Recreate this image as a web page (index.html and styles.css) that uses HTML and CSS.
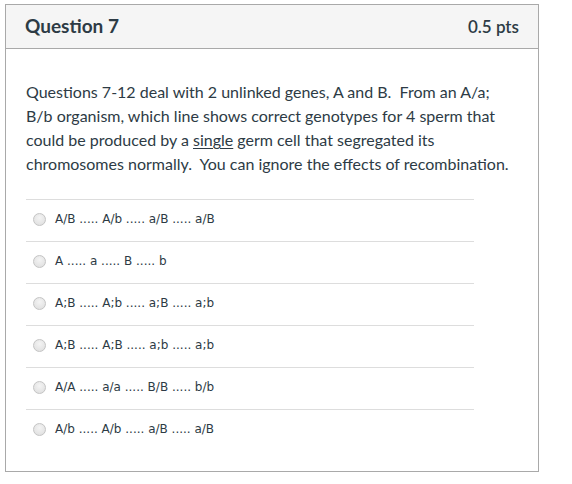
FILE: index.html
```html
<!DOCTYPE html>
<html>
<head>
<meta charset="utf-8">
<link rel="stylesheet" href="styles.css">
</head>
<body>
<div class="card">
  <div class="card-header">
    <div class="q-title">Question 7</div>
    <div class="q-pts">0.5 pts</div>
  </div>
  <div class="card-body">
    <p class="q-text">Questions 7-12 deal with 2 unlinked genes, A and B.&nbsp; From an A/a; B/b organism, which line shows correct genotypes for 4 sperm that could be produced by a <u>single</u> germ cell that segregated its chromosomes normally.&nbsp; You can ignore the effects of recombination.</p>
    <div class="answers">
      <label class="answer"><span class="radio"></span><span class="a-text">A/B ..... A/b ..... a/B ..... a/B</span></label>
      <label class="answer"><span class="radio"></span><span class="a-text">A ..... a ..... B ..... b</span></label>
      <label class="answer"><span class="radio"></span><span class="a-text">A;B ..... A;b ..... a;B ..... a;b</span></label>
      <label class="answer"><span class="radio"></span><span class="a-text">A;B ..... A;B ..... a;b ..... a;b</span></label>
      <label class="answer"><span class="radio"></span><span class="a-text">A/A ..... a/a ..... B/B ..... b/b</span></label>
      <label class="answer"><span class="radio"></span><span class="a-text">A/b ..... A/b ..... a/B ..... a/B</span></label>
    </div>
  </div>
</div>
</body>
</html>
```

FILE: styles.css
```css
html, body {
  margin: 0;
  padding: 0;
  background: #ffffff;
}
body {
  padding: 4px 0 0 5px;
  font-family: Lato, "Liberation Sans", sans-serif;
  color: #2d3b45;
}
.card {
  width: 532px;
  border: 1px solid #a9a9a9;
  background: #fff;
}
.card-header {
  display: flex;
  justify-content: space-between;
  align-items: center;
  height: 43px;
  padding: 0 19px 0 19px;
  background: #f5f5f5;
  border-bottom: 1px solid #a9a9a9;
}
.q-title {
  font-size: 19px;
  font-weight: 700;
  color: #2d3b45;
  margin-top: -2px;
}
.q-pts {
  font-size: 17px;
  font-weight: 600;
  color: #2d3b45;
}
.card-body {
  padding: 31px 20px 20px 20px;
}
.q-text {
  margin: 0;
  font-size: 16px;
  line-height: 24px;
  color: #2d3b45;
}
.q-text u {
  text-decoration-thickness: 1px;
  text-underline-offset: 2px;
}
.answers {
  margin-top: 23px;
  width: 448px;
}
.answer {
  display: flex;
  align-items: center;
  height: 41px;
  border-top: 1px solid #dddddd;
  padding-left: 7px;
}
.radio {
  width: 11px;
  height: 11px;
  border-radius: 50%;
  border: 1px solid #c4c4c4;
  background: radial-gradient(circle at 50% 35%, #f4f4f4 0%, #dcdcdc 100%);
  margin-right: 9px;
  margin-top: -2px;
  flex: none;
}
.a-text {
  font-family: "DejaVu Sans", Verdana, sans-serif;
  font-size: 12px;
  color: #2d3b45;
  margin-top: -3px;
}
```
